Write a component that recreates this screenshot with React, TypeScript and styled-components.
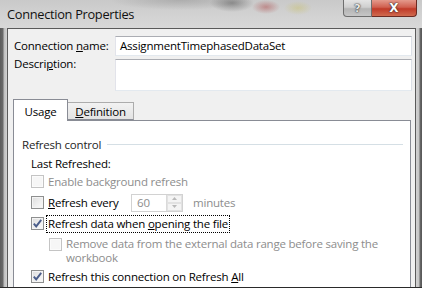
import React from 'react';
import styled, { createGlobalStyle } from 'styled-components';

const Global = createGlobalStyle`
  html, body { margin: 0; padding: 0; background: #fff; }
  body { font-family: "Open Sans", "Noto Sans", sans-serif; }
  * { box-sizing: border-box; }
`;

const UI_FONT = `"Open Sans", "Noto Sans", "DejaVu Sans", sans-serif`;

const Window = styled.div`
  width: 422px;
  height: 288px;
  overflow: hidden;
  display: flex;
  flex-direction: column;
  background: #cfcfcf;
  border-bottom: 1px solid #2a2a2a;
  font-family: ${UI_FONT};
  font-size: 11.5px;
  letter-spacing: -0.2px;
  color: #000;
`;

const TitleBar = styled.div`
  height: 28px;
  flex: none;
  display: flex;
  align-items: flex-start;
  background:
    radial-gradient(ellipse 22px 9px at 232px 3px, rgba(90, 90, 90, 0.55), transparent),
    radial-gradient(ellipse 14px 7px at 266px 7px, rgba(170, 60, 60, 0.45), transparent),
    radial-gradient(ellipse 14px 7px at 298px 8px, rgba(200, 190, 90, 0.4), transparent),
    radial-gradient(ellipse 70px 10px at 180px 0px, rgba(120, 120, 120, 0.35), transparent),
    linear-gradient(to bottom, #c9c9c9 0%, #d3d3d3 60%, #d8d8d8 100%);
`;

const Title = styled.div`
  padding: 5px 0 0 7px;
  font-size: 12.8px;
  letter-spacing: -0.3px;
  color: #111;
  white-space: nowrap;
`;

const CaptionButtons = styled.div`
  margin-left: auto;
  margin-right: 5px;
  display: flex;
`;

const CapButton = styled.div<{ $w: number; $close?: boolean }>`
  width: ${(p) => p.$w}px;
  height: 17px;
  display: flex;
  align-items: center;
  justify-content: center;
  border: 1px solid ${(p) => (p.$close ? '#6b2a22' : '#6e6e6e')};
  border-top: none;
  border-left-width: ${(p) => (p.$close ? 0 : 1)}px;
  border-radius: ${(p) => (p.$close ? '0 0 4px 0' : '0 0 0 4px')};
  background: ${(p) =>
    p.$close
      ? 'linear-gradient(to bottom, #e49a8c 0%, #d06050 45%, #c03a28 55%, #d06a4f 100%)'
      : 'linear-gradient(to bottom, #e4e4e4 0%, #cfcfcf 45%, #b4b4b4 55%, #c6c6c6 100%)'};
  color: ${(p) => (p.$close ? '#fff' : '#e8e8e8')};
  font-family: "DejaVu Sans", sans-serif;
  font-weight: bold;
  font-size: ${(p) => (p.$close ? 12 : 11)}px;
  letter-spacing: 0;
  text-shadow: 0 0 1px #222, 0 0 2px #333;
`;

const Body = styled.div`
  flex: 1;
  display: flex;
  min-height: 0;
`;

const Edge = styled.div<{ $side: 'left' | 'right' }>`
  flex: none;
  width: ${(p) => (p.$side === 'left' ? 7 : 6)}px;
  background: ${(p) =>
    p.$side === 'left'
      ? 'linear-gradient(to right, #5c5c5c 0, #6a6a6a 3px, #bdbdbd 4px, #d2d2d2 7px)'
      : 'linear-gradient(to right, #d2d2d2 0, #c4c4c4 3px, #6a6a6a 4px, #555 6px)'};
`;

const Client = styled.div`
  flex: 1;
  min-width: 0;
  background: #f0f0f0;
  border: 1px solid #5a5a5a;
  border-bottom: none;
  display: flex;
  flex-direction: column;
`;

const Fields = styled.div`
  display: grid;
  grid-template-columns: 107px 297px;
  row-gap: 3px;
  padding-top: 7px;
`;

const FieldLabel = styled.div<{ $top?: boolean }>`
  padding-left: 6px;
  line-height: ${(p) => (p.$top ? '14px' : '20px')};
  margin-top: ${(p) => (p.$top ? '-2px' : '0')};
  white-space: nowrap;
`;

const TextBox = styled.div<{ $h: number }>`
  height: ${(p) => p.$h}px;
  background: #fff;
  border: 1px solid #abadb3;
  border-color: #abadb3 #dbdfe6 #e3e9ef #e2e3ea;
  padding: 0 4px;
  line-height: 18px;
  white-space: nowrap;
  overflow: hidden;
`;

const TabStrip = styled.div`
  margin: 8px 0 0 5px;
  height: 22px;
  display: flex;
  align-items: flex-end;
  position: relative;
  z-index: 1;
`;

const Tab = styled.div<{ $active?: boolean }>`
  height: ${(p) => (p.$active ? 22 : 18)}px;
  width: ${(p) => (p.$active ? 55 : 66)}px;
  margin-bottom: ${(p) => (p.$active ? -1 : 0)}px;
  border: 1px solid ${(p) => (p.$active ? '#898c95' : '#acacac')};
  border-bottom: ${(p) => (p.$active ? 'none' : '1px solid #898c95')};
  border-left: ${(p) => (p.$active ? '1px solid #898c95' : 'none')};
  background: ${(p) =>
    p.$active ? '#fff' : 'linear-gradient(to bottom, #f2f2f2, #e3e3e3)'};
  display: flex;
  align-items: center;
  justify-content: center;
  padding-top: ${(p) => (p.$active ? 1 : 0)}px;
  white-space: nowrap;
`;

const Panel = styled.div`
  margin-left: 5px;
  width: 398px;
  flex: 1;
  background: #fff;
  border: 1px solid #898c95;
  border-bottom: none;
  display: grid;
  grid-template-rows: 21px 16px 21px 21px 21px 32px 21px;
  padding: 13px 7px 0 0;
`;

const GroupHeading = styled.div`
  display: flex;
  align-items: center;
  padding-left: 8px;
  gap: 6px;
  color: #1e1e1e;
  white-space: nowrap;
  &::after {
    content: '';
    flex: 1;
    height: 1px;
    background: #d5dfe5;
  }
`;

const SubLabel = styled.div`
  padding-left: 17px;
  align-self: end;
  line-height: 14px;
`;

const OptionRow = styled.div<{ $indent?: number; $top?: boolean }>`
  display: flex;
  align-items: ${(p) => (p.$top ? 'flex-start' : 'center')};
  padding-left: ${(p) => 17 + (p.$indent || 0)}px;
  padding-top: ${(p) => (p.$top ? 3 : 0)}px;
  white-space: nowrap;
`;

const Box = styled.div<{ $disabled?: boolean; $drop?: boolean }>`
  flex: none;
  width: 13px;
  height: 13px;
  margin-top: ${(p) => (p.$drop ? 1 : 0)}px;
  border: 1px solid ${(p) => (p.$disabled ? '#c4c4c4' : '#8e8f8f')};
  background: ${(p) =>
    p.$disabled
      ? '#f6f6f6'
      : 'linear-gradient(135deg, #dcdcdc 0%, #f0f0f0 60%, #fafafa 100%)'};
  box-shadow: inset 0 0 0 1px ${(p) => (p.$disabled ? '#fbfbfb' : '#f4f4f4')};
  display: flex;
  align-items: center;
  justify-content: center;
  margin-right: 4px;
`;

const OptionText = styled.span<{ $disabled?: boolean; $w?: number; $focus?: boolean; $multi?: boolean }>`
  flex: none;
  color: ${(p) => (p.$disabled ? '#8d8d8d' : '#000')};
  width: ${(p) => (p.$w ? `${p.$w}px` : 'auto')};
  line-height: ${(p) => (p.$focus ? '16px' : p.$multi ? '14px' : '13px')};
  border: ${(p) => (p.$focus ? '1px dotted #000' : 'none')};
  padding: ${(p) => (p.$focus ? '0 1px' : '0')};
  margin-left: ${(p) => (p.$focus ? '-2px' : '0')};
`;

const Spin = styled.div`
  flex: none;
  width: 52px;
  height: 18px;
  display: flex;
  border: 1px solid #d2d2d2;
  background: #fff;
`;

const SpinValue = styled.div`
  flex: 1;
  padding-left: 5px;
  line-height: 16px;
  color: #8d8d8d;
`;

const SpinButtons = styled.div`
  width: 16px;
  display: flex;
  flex-direction: column;
  border-left: 1px solid #dadada;
`;

const SpinHalf = styled.div`
  flex: 1;
  display: flex;
  align-items: center;
  justify-content: center;
  background: #f4f4f4;
  border: 1px solid #e2e2e2;
`;

const Trailing = styled.span`
  margin-left: 10px;
  color: #8d8d8d;
`;

const Check = () => (
  <svg width="9" height="9" viewBox="0 0 9 9">
    <path d="M0.8 4.6 L3.2 7.4 L8.2 0.9" fill="none" stroke="#4a5d8a" strokeWidth="1.9" strokeLinejoin="miter" />
  </svg>
);

const Arrow = ({ up }: { up?: boolean }) => (
  <svg width="5" height="3" viewBox="0 0 5 3">
    <path d={up ? 'M0 3 L2.5 0 L5 3 Z' : 'M0 0 L2.5 3 L5 0 Z'} fill="#b9b9b9" />
  </svg>
);

export default function App() {
  return (
    <>
      <Global />
      <Window>
        <TitleBar>
          <Title>Connection Properties</Title>
          <CaptionButtons>
            <CapButton $w={29}>?</CapButton>
            <CapButton $w={45} $close>
              X
            </CapButton>
          </CaptionButtons>
        </TitleBar>
        <Body>
          <Edge $side="left" />
          <Client>
            <Fields>
              <FieldLabel>
                Connection <u>n</u>ame:
              </FieldLabel>
              <TextBox $h={20}>AssignmentTimephasedDataSet</TextBox>
              <FieldLabel $top>
                Descri<u>p</u>tion:
              </FieldLabel>
              <TextBox $h={32} />
            </Fields>
            <TabStrip>
              <Tab $active>
                Usa<u>g</u>e
              </Tab>
              <Tab>
                <u>D</u>efinition
              </Tab>
            </TabStrip>
            <Panel>
              <GroupHeading>Refresh control</GroupHeading>
              <SubLabel>Last Refreshed:</SubLabel>
              <OptionRow>
                <Box $disabled />
                <OptionText $disabled>Enable background refresh</OptionText>
              </OptionRow>
              <OptionRow>
                <Box />
                <OptionText $w={83}>
                  <u>R</u>efresh every
                </OptionText>
                <Spin>
                  <SpinValue>60</SpinValue>
                  <SpinButtons>
                    <SpinHalf>
                      <Arrow up />
                    </SpinHalf>
                    <SpinHalf>
                      <Arrow />
                    </SpinHalf>
                  </SpinButtons>
                </Spin>
                <Trailing>minutes</Trailing>
              </OptionRow>
              <OptionRow>
                <Box>
                  <Check />
                </Box>
                <OptionText $focus>
                  Refresh data when <u>o</u>pening the file
                </OptionText>
              </OptionRow>
              <OptionRow $indent={18} $top>
                <Box $disabled $drop />
                <OptionText $disabled $multi>
                  Remove data from the external data range before saving the
                  <br />
                  workbook
                </OptionText>
              </OptionRow>
              <OptionRow>
                <Box>
                  <Check />
                </Box>
                <OptionText>
                  Refresh this connection on Refresh <u>A</u>ll
                </OptionText>
              </OptionRow>
            </Panel>
          </Client>
          <Edge $side="right" />
        </Body>
      </Window>
    </>
  );
}
